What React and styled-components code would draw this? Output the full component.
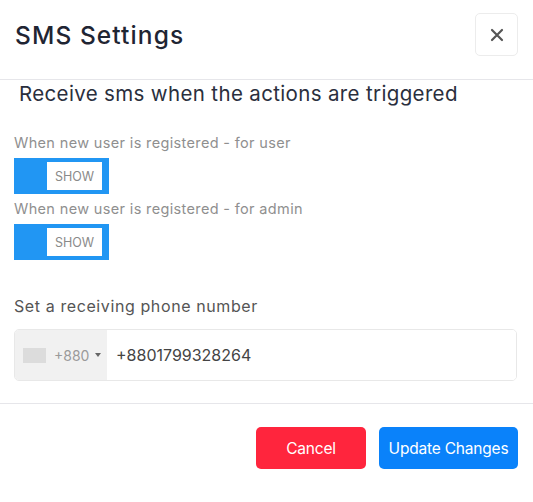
import React from "react";
import styled, { createGlobalStyle } from "styled-components";

const Global = createGlobalStyle`
  body {
    margin: 0;
    background: #fff;
    font-family: Inter, "Noto Sans", sans-serif;
  }
`;

const Modal = styled.div`
  width: 533px;
  height: 502px;
  display: flex;
  flex-direction: column;
`;

const Header = styled.div`
  height: 80px;
  box-sizing: border-box;
  display: flex;
  align-items: center;
  justify-content: space-between;
  padding: 0 15px 10px 15px;
  border-bottom: 1px solid #e6e6ea;
`;

const Title = styled.h2`
  margin: 0;
  font-size: 24.5px;
  font-weight: 500;
  color: #1f2533;
  letter-spacing: 1.1px;
`;

const CloseButton = styled.button`
  width: 43px;
  height: 43px;
  border: 1px solid #ececec;
  border-radius: 5px;
  background: #fff;
  display: flex;
  align-items: center;
  justify-content: center;
  padding: 0;
`;

const Body = styled.div`
  padding: 0 16px 0 14px;
  display: flex;
  flex-direction: column;
`;

const Heading = styled.div`
  font-size: 20.5px;
  color: #2a2f3d;
  padding: 1px 0 0 5px;
  height: 30px;
  margin-bottom: 22px;
  letter-spacing: 0.35px;
`;

const Label = styled.div`
  font-size: 14.5px;
  color: #8f8f8f;
  line-height: 20px;
  margin-bottom: 5px;
  letter-spacing: 0.35px;
`;

const Toggle = styled.div`
  width: 95px;
  height: 36px;
  background: #2196f3;
  display: flex;
  justify-content: flex-end;
  align-items: center;
  padding-right: 7px;
  box-sizing: border-box;
  margin-bottom: ${(p) => p.$gap}px;
`;

const ToggleKnob = styled.div`
  width: 55px;
  height: 28px;
  background: #fff;
  display: flex;
  align-items: center;
  justify-content: center;
  font-size: 12.5px;
  color: #8a8a8a;
`;

const FieldLabel = styled.div`
  font-size: 16px;
  color: #555;
  line-height: 22px;
  margin-bottom: 12px;
  letter-spacing: 0.6px;
`;

const PhoneBox = styled.div`
  height: 52px;
  box-sizing: border-box;
  border: 1px solid #e8e8e8;
  border-radius: 5px;
  display: flex;
  overflow: hidden;
`;

const CountryPicker = styled.div`
  width: 92px;
  background: #f1f1f1;
  display: flex;
  align-items: center;
  padding-left: 8px;
  box-sizing: border-box;
  gap: 8px;
  font-size: 14px;
  color: #9a9a9a;
`;

const Flag = styled.span`
  width: 23px;
  height: 15px;
  background: #dcdcdc;
`;

const Caret = styled.span`
  width: 0;
  height: 0;
  border-left: 3px solid transparent;
  border-right: 3px solid transparent;
  border-top: 4px solid #666;
  margin-left: -2px;
`;

const PhoneInput = styled.input`
  flex: 1;
  border: none;
  outline: none;
  padding: 0 0 0 9px;
  font-family: inherit;
  font-size: 16px;
  color: #444;
`;

const Footer = styled.div`
  margin-top: 22px;
  border-top: 1px solid #e6e6ea;
  display: flex;
  justify-content: flex-end;
  gap: 13px;
  padding: 23px 15px 0 0;
`;

const Button = styled.button`
  height: 42px;
  width: ${(p) => p.$w}px;
  border: none;
  border-radius: 5px;
  background: ${(p) => p.$bg};
  color: #fff;
  font-family: inherit;
  font-size: 15.5px;
  letter-spacing: -0.2px;
`;

export default function App() {
  return (
    <Modal>
      <Global />
      <Header>
        <Title>SMS Settings</Title>
        <CloseButton>
          <svg width="14" height="14" viewBox="0 0 14 14">
            <path d="M2 2L12 12M12 2L2 12" stroke="#555" strokeWidth="2.2" strokeLinecap="round" />
          </svg>
        </CloseButton>
      </Header>
      <Body>
        <Heading>Receive sms when the actions are triggered</Heading>
        <Label>When new user is registered - for user</Label>
        <Toggle $gap={5}><ToggleKnob>SHOW</ToggleKnob></Toggle>
        <Label>When new user is registered - for admin</Label>
        <Toggle $gap={35}><ToggleKnob>SHOW</ToggleKnob></Toggle>
        <FieldLabel>Set a receiving phone number</FieldLabel>
        <PhoneBox>
          <CountryPicker>
            <Flag />
            +880
            <Caret />
          </CountryPicker>
          <PhoneInput defaultValue="+8801799328264" />
        </PhoneBox>
      </Body>
      <Footer>
        <Button $w={110} $bg="#ff253d">Cancel</Button>
        <Button $w={139} $bg="#0a82fa">Update Changes</Button>
      </Footer>
    </Modal>
  );
}
